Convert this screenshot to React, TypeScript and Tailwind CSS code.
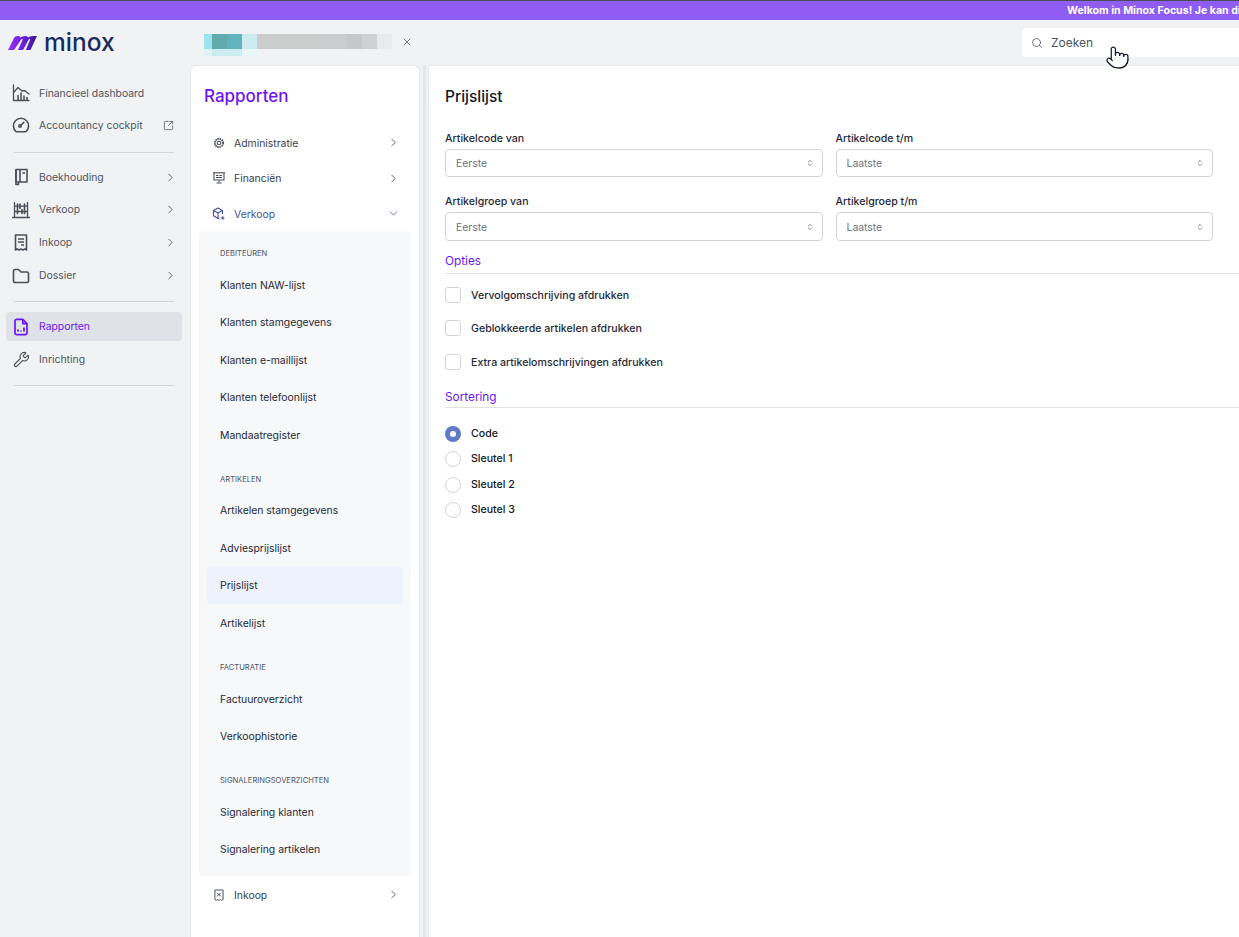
import React from "react";
import { ChevronRight, ChevronDown, ChevronsUpDown, Search, X, Wrench, SquareArrowOutUpRight, Pointer } from "lucide-react";

const S = "#4b5058";
const Dashboard = () => (
  <svg width="18" height="18" viewBox="0 0 18 18" fill="none" stroke={S} strokeWidth="1.3" strokeLinecap="round" strokeLinejoin="round">
    <path d="M1.5 1v15.5H17" />
    <path d="M2 8l4-4.5 4 3.5 2.5-.5L17 10" />
    <path d="M6 16v-4.5M9 16v-7M12 16v-4M15 16v-2.5" strokeWidth="1.6" />
  </svg>
);
const Cockpit = () => (
  <svg width="18" height="18" viewBox="0 0 18 18" fill="none" stroke={S} strokeWidth="1.6" strokeLinecap="round">
    <path d="M4.2 15.8h9.6a7.6 7.6 0 1 0-9.6 0z" />
    <circle cx="8" cy="10" r="1.2" />
    <path d="M9.2 9l2.6-2.6" />
  </svg>
);
const Book = () => (
  <svg width="18" height="18" viewBox="0 0 18 18" fill="none" stroke={S} strokeWidth="1.6" strokeLinejoin="round">
    <path d="M4 1.5h11v12.5H4z" />
    <path d="M4 1.5v15h2.5V14" />
    <path d="M8 1.5V14" />
    <path d="M10.5 5h2.5" />
  </svg>
);
const Abacus = () => (
  <svg width="18" height="18" viewBox="0 0 18 18" fill="none" stroke={S} strokeWidth="1.3" strokeLinecap="round">
    <path d="M2.5 1.5v14.5M15.5 1.5v14.5M0.5 16.5h17M2.5 5.2h13M2.5 10.5h13" />
    <path d="M5.5 3.2v4M8 3.2v4M12.5 3.2v4M5.5 8.5v4M10 8.5v4M12.5 8.5v4" strokeWidth="1.7" />
  </svg>
);
const Receipt = () => (
  <svg width="18" height="18" viewBox="0 0 18 18" fill="none" stroke={S} strokeWidth="1.6" strokeLinejoin="round">
    <path d="M3.5 1h11v15l-1.8-1-1.8 1-1.9-1-1.9 1-1.8-1-1.8 1z" />
    <path d="M6 5h6M6 8h6M9 11h3" />
  </svg>
);
const FolderIc = () => (
  <svg width="18" height="18" viewBox="0 0 18 18" fill="none" stroke={S} strokeWidth="1.6" strokeLinejoin="round">
    <path d="M1.5 4a1.5 1.5 0 0 1 1.5-1.5h3.5L9 5h6a1.5 1.5 0 0 1 1.5 1.5V14a1.5 1.5 0 0 1-1.5 1.5H3A1.5 1.5 0 0 1 1.5 14z" />
  </svg>
);
const ReportIc = () => (
  <svg width="18" height="18" viewBox="0 0 18 18" fill="none" stroke="#6b16f0" strokeWidth="1.7" strokeLinejoin="round">
    <path d="M3 3a1.6 1.6 0 0 1 1.6-1.6h6.2L15 5.6V15a1.6 1.6 0 0 1-1.6 1.6H4.6A1.6 1.6 0 0 1 3 15z" />
    <path d="M10.8 1.4v4.2H15" />
    <path d="M6 13.5v-2M9 13.5v-1M12 13.5v-4" strokeWidth="1.8" />
  </svg>
);
const Gear = () => (
  <svg width="12" height="12" viewBox="0 0 12 12" fill="none" stroke={S} strokeWidth="1.1">
    <circle cx="6" cy="6" r="4.2" strokeDasharray="1.6 .6" strokeWidth="1.8" />
    <circle cx="6" cy="6" r="1.8" />
  </svg>
);
const Screen = () => (
  <svg width="12" height="12" viewBox="0 0 12 12" fill="none" stroke={S} strokeWidth="1.1">
    <path d="M0 .8h12" />
    <path d="M1 .8V8h10V.8" />
    <path d="M6 8v2.5M3.5 11h5M3 3.5h2.5M6.5 3.5h2.5M3 5.5h6" strokeWidth="1" />
  </svg>
);
const Cube = () => (
  <svg width="13" height="13" viewBox="0 0 13 13" fill="none" stroke="#44509a" strokeWidth="1.1" strokeLinejoin="round">
    <path d="M10.5 7V3.4L6 1 1.5 3.4v5.4L6 11.5l1.5-.8" />
    <path d="M1.5 3.4L6 6l4.5-2.6M6 6v5.5" />
    <path d="M9 11h3.5M10.8 9.2V12.8" strokeWidth="1.2" />
  </svg>
);
const ReceiptX = () => (
  <svg width="10" height="12" viewBox="0 0 11 13" fill="none" stroke={S} strokeWidth="1.1">
    <path d="M1 1h9v10.5l-1.5.9-1.5-.9-1.500.9-1.500-.9-1.500.9-1.500-.9z" />
    <path d="M3.5 4l4 4M7.5 4l-4 4" />
  </svg>
);

const Logo = () => (
  <svg width="29" height="14" viewBox="0 0 29 14">
    <defs>
      <linearGradient id="mg" x1="0" y1="0" x2="1" y2="0">
        <stop offset="0" stopColor="#9a30f5" />
        <stop offset="0.55" stopColor="#6420dc" />
        <stop offset="1" stopColor="#341a8c" />
      </linearGradient>
    </defs>
    <path
      d="M0 14 L6 2 Q7 0 10 0 Q12.5 0 12.5 1.5 Q14 0 17.5 0 Q19.8 0 20 1.5 Q21.5 0 25 0 L29 0 L22.5 14 L17.8 14 L22 4 Q22.5 2.5 21 3 L15 14 L10 14 L14.5 4 Q15 2.5 13.5 3 L6 14 Z"
      fill="url(#mg)"
    />
  </svg>
);

function NavRow({ icon, label, chevron, active, ext, h }: { icon: React.ReactNode; label: string; chevron?: boolean; active?: boolean; ext?: boolean; h: string }) {
  return (
    <div className={`${h} ml-[6px] mr-[8px] flex items-center rounded pl-[6px] pr-[5px] ${active ? "bg-[#dfe2e7] text-[#6b16f0]" : "text-[#4b5563]"}`}>
      <span className="flex w-[18px] shrink-0 items-center justify-center">{icon}</span>
      <span className="ml-[9px] flex-1 pt-[2px] text-[10.4px] leading-none">{label}</span>
      {chevron && <ChevronRight size={13} strokeWidth={1.6} className="text-[#4b5058]" />}
      {ext && <SquareArrowOutUpRight size={11} strokeWidth={1.6} className="mr-[3px] text-[#4b5058]" />}
    </div>
  );
}

const Rule = ({ cls }: { cls: string }) => <div className={`ml-[14px] mr-[16px] h-px bg-[#d1d5db] ${cls}`} />;

function Sidebar() {
  return (
    <aside className="flex w-[190px] shrink-0 flex-col">
      <div className="flex h-[45px] items-center gap-[7px] pl-[8px]">
        <Logo />
        <span className="text-[24.5px] font-medium leading-none text-[#1a2b5f]">minox</span>
      </div>
      <div className="pt-[12px]">
        <NavRow h="h-[32px]" icon={<Dashboard />} label="Financieel dashboard" />
        <NavRow h="h-[32px]" icon={<Cockpit />} label="Accountancy cockpit" ext />
        <Rule cls="mt-[11px] mb-[8px]" />
        <NavRow h="h-[32px]" icon={<Book />} label="Boekhouding" chevron />
        <NavRow h="h-[33px]" icon={<Abacus />} label="Verkoop" chevron />
        <NavRow h="h-[33px]" icon={<Receipt />} label="Inkoop" chevron />
        <NavRow h="h-[33px]" icon={<FolderIc />} label="Dossier" chevron />
        <Rule cls="mt-[9px] mb-[10px]" />
        <NavRow h="h-[29px]" active icon={<ReportIc />} label="Rapporten" />
        <NavRow h="h-[36px]" icon={<Wrench size={17} strokeWidth={1.6} className="text-[#4b5058]" />} label="Inrichting" />
        <Rule cls="mt-[8px]" />
      </div>
    </aside>
  );
}

function ReportRow({ icon, label, open, h }: { icon: React.ReactNode; label: string; open?: boolean; h: string }) {
  return (
    <div className={`${h} flex items-center pl-[21px] pr-[19px] text-[10.4px] ${open ? "text-[#44509a]" : "text-[#374151]"}`}>
      <span className="flex w-[13px] justify-center">{icon}</span>
      <span className="ml-[9px] flex-1 pt-[3px] leading-none">{label}</span>
      {open ? <ChevronDown size={13} strokeWidth={1.4} className="text-[#44509a]" /> : <ChevronRight size={13} strokeWidth={1.6} className="text-[#4b5058]" />}
    </div>
  );
}

const groups: { title: string; items: string[] }[] = [
  { title: "DEBITEUREN", items: ["Klanten NAW-lijst", "Klanten stamgegevens", "Klanten e-maillijst", "Klanten telefoonlijst", "Mandaatregister"] },
  { title: "ARTIKELEN", items: ["Artikelen stamgegevens", "Adviesprijslijst", "Prijslijst", "Artikelijst"] },
  { title: "FACTURATIE", items: ["Factuuroverzicht", "Verkoophistorie"] },
  { title: "SIGNALERINGSOVERZICHTEN", items: ["Signalering klanten", "Signalering artikelen"] },
];

function ReportsPanel() {
  return (
    <section className="h-[872px] w-[230px] shrink-0 rounded-t-md border border-b-0 border-[#e5e7eb] bg-white">
      <h2 className="pl-[13px] pt-[19px] text-[17px] font-medium leading-[22px] text-[#6b16f0]">Rapporten</h2>
      <div className="mt-[18px]">
        <ReportRow h="h-[35px]" icon={<Gear />} label="Administratie" />
        <ReportRow h="h-[36px]" icon={<Screen />} label="Financiën" />
        <ReportRow h="h-[35px]" open icon={<Cube />} label="Verkoop" />
      </div>
      <div className="mx-[8px] rounded bg-[#f7f8fa] px-[8px] pb-[8px] pt-[9px]">
        {groups.map((g, i) => (
          <div key={g.title} className={i ? "mt-[12px]" : ""}>
            <div className="flex h-[26.5px] items-center pl-[13px] pt-[2px] text-[7.6px] leading-none text-[#4b5563]">{g.title}</div>
            {g.items.map((it) => (
              <div key={it} className={`flex h-[37.4px] items-center rounded pl-[13px] pt-[2px] text-[10.4px] leading-none text-[#1f2937] ${it === "Prijslijst" ? "bg-[#eef2fd]" : ""}`}>
                {it}
              </div>
            ))}
          </div>
        ))}
      </div>
      <ReportRow h="h-[37px]" icon={<ReceiptX />} label="Inkoop" />
    </section>
  );
}

function SelectField({ label, value, h }: { label: string; value: string; h: string }) {
  return (
    <div>
      <div className="text-[10.6px] font-medium leading-[14px] text-[#1f2937]">{label}</div>
      <div className={`${h} mt-[3px] flex items-center justify-between rounded border border-[#d1d5db] bg-white pl-[10px] pr-[8px] text-[10.4px] text-[#6b7280]`}>
        <span className="pt-[2px]">{value}</span>
        <ChevronsUpDown size={8} strokeWidth={2} className="text-[#4b5563]" />
      </div>
    </div>
  );
}

const SectionHead = ({ children, cls }: { children: string; cls: string }) => (
  <div className={`border-b border-[#e0e2e6] text-[11.8px] font-normal leading-[14px] text-[#6b16f0] ${cls}`}>{children}</div>
);

function Check({ label, cls }: { label: string; cls: string }) {
  return (
    <div className={`flex h-[16px] items-center gap-[10px] ${cls}`}>
      <span className="h-[16px] w-[16px] rounded-[3px] border border-[#d1d5db] bg-white" />
      <span className="pt-[2px] text-[10.6px] font-medium leading-none text-[#1f2937]">{label}</span>
    </div>
  );
}

function Radio({ label, on, cls }: { label: string; on?: boolean; cls: string }) {
  return (
    <div className={`flex h-[16px] items-center gap-[10px] ${cls}`}>
      {on ? (
        <span className="flex h-[16px] w-[16px] items-center justify-center rounded-full bg-[#5f7ac6]">
          <span className="h-[6px] w-[6px] rounded-full bg-white" />
        </span>
      ) : (
        <span className="h-[16px] w-[16px] rounded-full border border-[#d1d5db] bg-white" />
      )}
      <span className="pt-[1px] text-[10.6px] font-medium leading-none text-[#111827]">{label}</span>
    </div>
  );
}

function Main() {
  return (
    <main className="h-[872px] min-w-0 flex-1 border-l border-t border-[#e5e7eb] bg-white pl-[16px] pt-[21px]">
      <h1 className="text-[15.5px] font-medium leading-[20px] text-[#111827]">Prijslijst</h1>
      <div className="mt-[25px] grid w-[768px] grid-cols-2 gap-x-[13px] gap-y-[18px]">
        <SelectField h="h-[28px]" label="Artikelcode van" value="Eerste" />
        <SelectField h="h-[28px]" label="Artikelcode t/m" value="Laatste" />
        <SelectField h="h-[29px]" label="Artikelgroep van" value="Eerste" />
        <SelectField h="h-[29px]" label="Artikelgroep t/m" value="Laatste" />
      </div>
      <div className="mt-[13px]"><SectionHead cls="pb-[5px]">Opties</SectionHead></div>
      <Check cls="mt-[13px]" label="Vervolgomschrijving afdrukken" />
      <Check cls="mt-[17px]" label="Geblokkeerde artikelen afdrukken" />
      <Check cls="mt-[18px]" label="Extra artikelomschrijvingen afdrukken" />
      <div className="mt-[20px]"><SectionHead cls="pb-[3px]">Sortering</SectionHead></div>
      <Radio on cls="mt-[18px]" label="Code" />
      <Radio cls="mt-[9px]" label="Sleutel 1" />
      <Radio cls="mt-[10px]" label="Sleutel 2" />
      <Radio cls="mt-[9px]" label="Sleutel 3" />
    </main>
  );
}

const blurTop = ["w-[8px] bg-[#9ae3ef]", "w-[15px] bg-[#62abad]", "w-[15px] bg-[#62b3bd]", "w-[15px] bg-[#cdecf1]", "w-[60px] bg-[#cbcccc]", "w-[30px] bg-[#cbcccd]", "w-[15px] bg-[#c6c7c8]", "w-[15px] bg-[#cfd1d3]", "w-[15px] bg-[#e9eaec]"];

function Header() {
  return (
    <div className="flex h-[45px] min-w-0 flex-1 items-start">
      <div className="pl-[14px] pt-[14px]">
        <div className="flex h-[15px]">
          {blurTop.map((c) => <div key={c} className={c} />)}
        </div>
        <div className="flex h-[7px]">
          <div className="w-[8px] bg-[#dff3f6]" />
          <div className="w-[30px] bg-[#cdecf1]" />
          <div className="w-[15px] bg-[#e9f6f8]" />
        </div>
      </div>
      <X size={12} strokeWidth={1.6} className="ml-[9px] mt-[16px] text-[#4b5563]" />
      <div className="relative ml-auto mt-[8px] flex h-[29px] w-[217px] items-center rounded-l bg-white pl-[9px] text-[12px] text-[#4b5563]">
        <Search size={12} strokeWidth={1.6} className="text-[#4b5563]" />
        <span className="ml-[8px] pt-[1px]">Zoeken</span>
        <Pointer size={25} strokeWidth={1.2} fill="white" className="absolute left-[83px] top-[17px] text-[#111827]" />
      </div>
    </div>
  );
}

export default function App() {
  return (
    <div className="flex h-[937px] w-[1239px] flex-col overflow-hidden bg-[#f1f2f4] font-['Inter',sans-serif]">
      <div className="h-[20px] shrink-0 overflow-hidden whitespace-nowrap border-t border-[#4b4b55] bg-[#8f5df2] pl-[1067px] text-[10.6px] font-bold leading-[19px] text-white">
        Welkom in Minox Focus! Je kan di
      </div>
      <div className="flex min-h-0 flex-1">
        <Sidebar />
        <div className="flex min-w-0 flex-1 flex-col">
          <Header />
          <div className="flex">
            <ReportsPanel />
            <div className="relative w-[8px] shrink-0">
              <div className="absolute left-[3px] top-0 h-full w-[3px] bg-[#e3e5e8]" />
            </div>
            <Main />
          </div>
        </div>
      </div>
    </div>
  );
}
